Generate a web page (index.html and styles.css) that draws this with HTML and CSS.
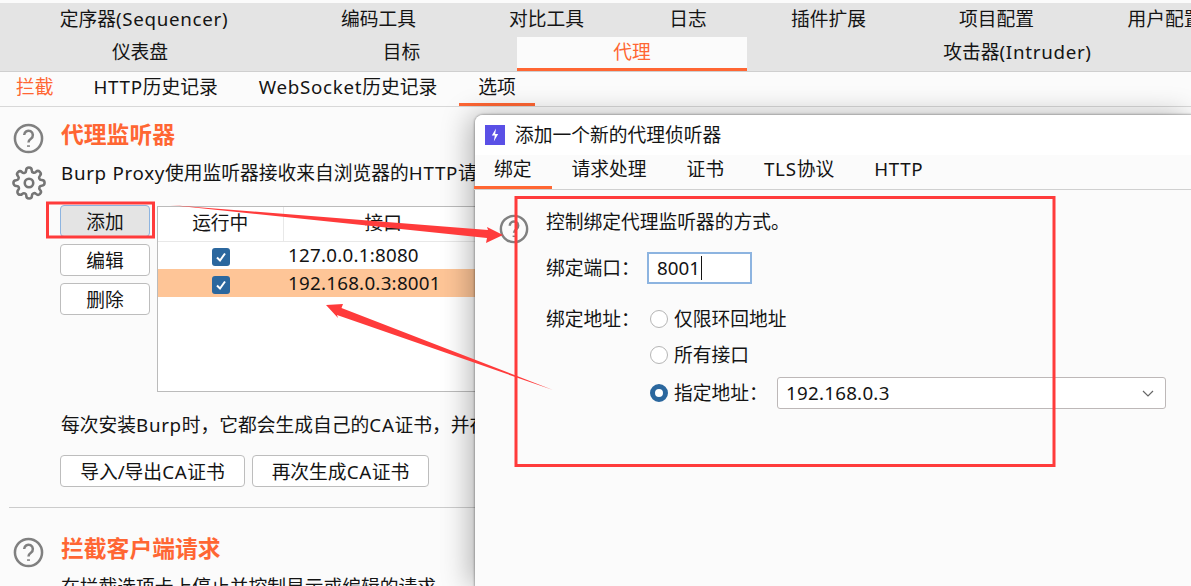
FILE: index.html
```html
<!DOCTYPE html>
<html lang="zh-CN">

<head>
    <meta charset="utf-8">
    <title>代理监听器</title>
    <link rel="stylesheet" href="styles.css">
</head>

<body>
    <div class="page">
        <div class="tabs_top">
            <div class="tab_row1">
                <div>定序器<span class="en">(Sequencer)</span></div>
                <div>编码工具</div>
                <div>对比工具</div>
                <div>日志</div>
                <div>插件扩展</div>
                <div>项目配置</div>
                <div>用户配置</div>
            </div>
            <div class="tab_row2">
                <div class="tab_dash">仪表盘</div>
                <div>目标</div>
                <div class="tab_active">代理</div>
                <div class="tab_intruder">攻击器<span class="en">(Intruder)</span></div>
            </div>
        </div>

        <div class="sub_tabs">
            <div class="sub_tab sub_first">拦截</div>
            <div class="sub_tab"><span class="en">HTTP</span>历史记录</div>
            <div class="sub_tab"><span class="en">WebSocket</span>历史记录</div>
            <div class="sub_tab sub_active">选项</div>
        </div>

        <div class="section">
            <div class="side">
                <svg class="help" viewBox="0 0 32 32"><circle cx="16" cy="16" r="14" /><path d="M11.5 12.5a4.5 4.5 0 1 1 7 3.7c-1.6 1.1-2.5 1.9-2.5 3.8" /><path class="dot" d="M16 23v1.6" /></svg>
                <svg class="gear" viewBox="0 0 24 24"><circle cx="12" cy="12" r="3" /><path d="M19.4 15a1.65 1.65 0 0 0 .33 1.82l.06.06a2 2 0 0 1-2.83 2.83l-.06-.06a1.65 1.65 0 0 0-2.82 1.17V21a2 2 0 0 1-4 0v-.09A1.65 1.65 0 0 0 7.28 19.7l-.06.06a2 2 0 0 1-2.83-2.83l.06-.06a1.65 1.65 0 0 0-1.17-2.82H3a2 2 0 0 1 0-4h.09A1.65 1.65 0 0 0 4.3 7.28l-.06-.06a2 2 0 0 1 2.83-2.83l.06.06a1.65 1.65 0 0 0 2.82-1.17V3a2 2 0 0 1 4 0v.09a1.65 1.65 0 0 0 2.82 1.17l.06-.06a2 2 0 0 1 2.83 2.83l-.06.06a1.65 1.65 0 0 0 1.17 2.82H21a2 2 0 0 1 0 4h-.09a1.65 1.65 0 0 0-1.51 1z" /></svg>
            </div>
            <div class="content">
                <h2 class="title">代理监听器</h2>
                <p class="desc"><span class="en">Burp Proxy</span>使用监听器接收来自浏览器的<span class="en">HTTP</span>请</p>
                <div class="listeners">
                    <div class="side_btns">
                        <button class="btn btn_add">添加</button>
                        <button class="btn">编辑</button>
                        <button class="btn">删除</button>
                    </div>
                    <div class="table_box">
                        <table class="table">
                            <tr>
                                <th class="col_run">运行中</th>
                                <th class="col_port">接口</th>
                            </tr>
                            <tr>
                                <td class="cell_check"><span class="check"><svg viewBox="0 0 18 18"><path d="M5 9.5l3 3 5-7" /></svg></span></td>
                                <td>127.0.0.1:8080</td>
                            </tr>
                            <tr class="row_selected">
                                <td class="cell_check"><span class="check"><svg viewBox="0 0 18 18"><path d="M5 9.5l3 3 5-7" /></svg></span></td>
                                <td>192.168.0.3:8001</td>
                            </tr>
                        </table>
                    </div>
                </div>
                <p class="desc cert_text">每次安装<span class="en">Burp</span>时，它都会生成自己的<span class="en">CA</span>证书，并在</p>
                <div class="cert_btns">
                    <button class="btn btn_wide">导入/导出<span class="en">CA</span>证书</button>
                    <button class="btn btn_regen">再次生成<span class="en">CA</span>证书</button>
                </div>
            </div>
        </div>

        <div class="section section2">
            <div class="side">
                <svg class="help" viewBox="0 0 32 32"><circle cx="16" cy="16" r="14" /><path d="M11.5 12.5a4.5 4.5 0 1 1 7 3.7c-1.6 1.1-2.5 1.9-2.5 3.8" /><path class="dot" d="M16 23v1.6" /></svg>
            </div>
            <div class="content">
                <h2 class="title">拦截客户端请求</h2>
                <p class="desc">在拦截选项卡上停止并控制显示或编辑的请求。</p>
            </div>
        </div>

        <div class="dialog">
            <div class="dialog_title">
                <svg class="app_icon" viewBox="0 0 20 20"><rect width="20" height="20" fill="#5a50e6" /><path d="M11 3.5L6.8 10.6h3l-1 5.9 4.4-7.6h-3z" fill="#fff" /></svg>
                <span>添加一个新的代理侦听器</span>
            </div>
            <div class="dialog_tabs">
                <div class="d_tab d_active">绑定</div>
                <div class="d_tab">请求处理</div>
                <div class="d_tab">证书</div>
                <div class="d_tab"><span class="en">TLS</span>协议</div>
                <div class="d_tab"><span class="en">HTTP</span></div>
            </div>
            <div class="dialog_body">
                <svg class="help help_d" viewBox="0 0 32 32"><circle cx="16" cy="16" r="14" /><path d="M11.5 12.5a4.5 4.5 0 1 1 7 3.7c-1.6 1.1-2.5 1.9-2.5 3.8" /><path class="dot" d="M16 23v1.6" /></svg>
                <div class="form">
                    <p class="form_text">控制绑定代理监听器的方式。</p>
                    <div class="form_port">
                        <span class="form_label">绑定端口：</span>
                        <div class="input">8001<span class="caret"></span></div>
                    </div>
                    <div class="form_addr">
                        <span class="form_label">绑定地址：</span>
                        <div class="radios">
                            <div class="radio_row"><span class="radio"></span>仅限环回地址</div>
                            <div class="radio_row"><span class="radio"></span>所有接口</div>
                            <div class="radio_row">
                                <span class="radio radio_on"></span>
                                <span class="radio_label">指定地址：</span>
                                <div class="select">192.168.0.3
                                    <svg class="chevron" viewBox="0 0 12 7"><path d="M1 1l5 5 5-5" /></svg>
                                </div>
                            </div>
                        </div>
                    </div>
                </div>
            </div>
        </div>

        <!-- red marks drawn over the screenshot -->
        <svg class="marks" viewBox="0 0 1191 586">
            <rect x="47.5" y="203" width="106" height="34" />
            <rect x="516" y="197.5" width="538" height="268" />
            <polygon class="fill" points="170,205 488,230 487,227 503,235 486,243 487,238" />
            <polygon class="fill" points="326,305 343,304 341.5,308 553,390 337,315 338,318" />
        </svg>
    </div>
</body>

</html>
```

FILE: styles.css
```css
* {
    margin: 0;
    padding: 0;
    box-sizing: border-box;
}

body {
    font-family: "Noto Sans", "Noto Sans CJK SC", sans-serif;
    font-size: 18.75px;
    line-height: 28px;
    color: #141414;
    background-color: #fbfbfb;
    overflow: hidden;
}

.en {
    letter-spacing: 0.7px;
}

.page {
    position: relative;
    width: 1191px;
    height: 586px;
    overflow: hidden;
}

.tabs_top {
    margin-top: 3px;
    background-color: #e4e4e4;
    border-bottom: 1px solid #cfcfcf;
}

.tab_row1,
.tab_row2 {
    display: grid;
    height: 34px;
    padding-bottom: 2px;
    text-align: center;
    align-items: center;
}

.tab_row1 {
    grid-template-columns: 288px 181px 155px 128px 153px 183px 154px;
    overflow: hidden;
    white-space: nowrap;
}

.tab_row2 {
    grid-template-columns: 286px 231px 230px 1fr;
    padding-bottom: 0;
}

.tab_row2 div {
    height: 34px;
    line-height: 30px;
}

.tab_dash {
    padding-right: 6px;
}

.tab_row2 .tab_active {
    color: #ff6633;
    background-color: #fbfbfb;
    border-bottom: 3px solid #ff6633;
}

.tab_intruder {
    padding-left: 97px;
}

.sub_tabs {
    display: flex;
    gap: 3px;
    height: 35px;
    border-bottom: 1px solid #d8d8d8;
}

.sub_tab {
    padding: 0 19px;
    line-height: 30px;
}

.sub_first {
    padding-left: 16px;
    padding-right: 18px;
    color: #ff6633;
}

.sub_active {
    border-bottom: 3px solid #ff6633;
}

.section {
    display: grid;
    grid-template-columns: 48px 1fr;
    margin-left: 9px;
    padding: 13px 0 20px 4px;
    border-bottom: 1px solid #cccccc;
    white-space: nowrap;
}

.section2 {
    padding-top: 26px;
    border-bottom: none;
}

.side {
    display: flex;
    flex-direction: column;
}

.help {
    display: block;
    width: 31px;
    height: 31px;
    margin-top: 3px;
    fill: none;
    stroke: #808080;
    stroke-width: 2.6;
}

.help .dot {
    stroke-width: 3;
}

.gear {
    width: 34px;
    height: 34px;
    margin-top: 12px;
    margin-left: -1px;
    fill: none;
    stroke: #757575;
    stroke-width: 1.8;
}

.title {
    font-size: 22.8px;
    line-height: 30px;
    font-weight: 700;
    color: #ff6633;
}

.desc {
    margin-top: 9px;
}

.listeners {
    display: flex;
    gap: 7px;
    margin-top: 18px;
    margin-left: -1px;
}

.side_btns {
    display: flex;
    flex-direction: column;
    gap: 7px;
}

.btn {
    width: 90px;
    height: 32px;
    padding-top: 1px;
    font-family: inherit;
    font-size: 18.75px;
    line-height: 28px;
    color: #141414;
    background-color: #ffffff;
    border: 1px solid #bdbdbd;
    border-radius: 4px;
}

.btn_add {
    background-color: #e4e4e4;
    border-color: #8db4e0;
}

.table_box {
    width: 400px;
    height: 186px;
    margin-top: 1px;
    background-color: #ffffff;
    border: 1px solid #bbbbbb;
}

.table {
    width: 325px;
    table-layout: fixed;
    border-collapse: collapse;
    letter-spacing: 0.25px;
    line-height: 26px;
}

.table th {
    height: 34px;
    padding-bottom: 1px;
    font-weight: 400;
    letter-spacing: 0;
    border-bottom: 1px solid #e8e8e8;
}

.col_run {
    width: 125px;
    border-right: 1px solid #e8e8e8;
}

.table td {
    height: 28px;
    padding: 0 0 1px 5px;
}

.table .cell_check {
    padding: 0;
    text-align: center;
}

.row_selected {
    background-color: #fec597;
}

.check {
    display: inline-block;
    width: 18px;
    height: 18px;
    vertical-align: middle;
    background-color: #2b679e;
    border-radius: 3px;
}

.check svg {
    display: block;
    fill: none;
    stroke: #ffffff;
    stroke-width: 2;
}

.cert_text {
    margin-top: 19px;
}

.cert_btns {
    display: flex;
    gap: 7px;
    margin-top: 16px;
    margin-left: -1px;
}

.btn_wide {
    width: 185px;
}

.btn_regen {
    width: 177px;
}

.dialog {
    position: absolute;
    left: 475px;
    top: 115px;
    right: 0;
    bottom: 0;
    background-color: #fbfbfb;
    border-top-left-radius: 8px;
    box-shadow: 0 0 2px 1px rgba(0, 0, 0, 0.25), -6px 0 28px rgba(0, 0, 0, 0.28);
    white-space: nowrap;
}

.dialog_title {
    display: flex;
    align-items: center;
    gap: 10px;
    height: 40px;
    padding-left: 10px;
    background-color: #ffffff;
    border-top-left-radius: 8px;
}

.app_icon {
    width: 20px;
    height: 20px;
}

.dialog_tabs {
    display: flex;
    height: 35px;
    margin-left: -1px;
    border-bottom: 1px solid #d0d0d0;
}

.d_tab {
    padding: 0 20px;
    line-height: 28px;
}

.d_active {
    border-bottom: 3px solid #ff6633;
}

.dialog_body {
    display: grid;
    grid-template-columns: 71px 1fr;
}

.help_d {
    width: 30px;
    height: 30px;
    margin: 24px 0 0 24px;
}

.form_text {
    margin-top: 18px;
}

.form_port {
    display: flex;
    align-items: center;
    margin-top: 16px;
}

.form_label {
    width: 101px;
}

.input {
    display: flex;
    align-items: center;
    width: 105px;
    height: 32px;
    padding-left: 8px;
    background-color: #ffffff;
    border: 2px solid #8db4e0;
}

.caret {
    width: 1px;
    height: 24px;
    margin-left: 1px;
    background-color: #141414;
}

.form_addr {
    display: flex;
    margin-top: 21px;
}

.form_addr .form_label {
    width: 104px;
}

.radios {
    display: flex;
    flex-direction: column;
    gap: 8px;
}

.radio_row {
    display: flex;
    align-items: center;
    gap: 6px;
}

.radio {
    width: 18px;
    height: 18px;
    background-color: #ffffff;
    border: 1px solid #b5b5b5;
    border-radius: 50%;
}

.radio_on {
    background-color: #ffffff;
    border: 5px solid #2b679e;
}

.radio_label {
    width: 97px;
}

.select {
    display: flex;
    align-items: center;
    justify-content: space-between;
    width: 389px;
    height: 32px;
    padding: 0 11px 0 8px;
    letter-spacing: 0.25px;
    background-color: #ffffff;
    border: 1px solid #bdb8b8;
    border-radius: 3px;
}

.chevron {
    width: 12px;
    height: 7px;
    fill: none;
    stroke: #666666;
    stroke-width: 1.2;
}

.marks {
    position: absolute;
    left: 0;
    top: 0;
    width: 1191px;
    height: 586px;
    fill: none;
    stroke: #ff3b3b;
    stroke-width: 3;
    pointer-events: none;
}

.marks .fill {
    fill: #ff3b3b;
    stroke: none;
}
```
